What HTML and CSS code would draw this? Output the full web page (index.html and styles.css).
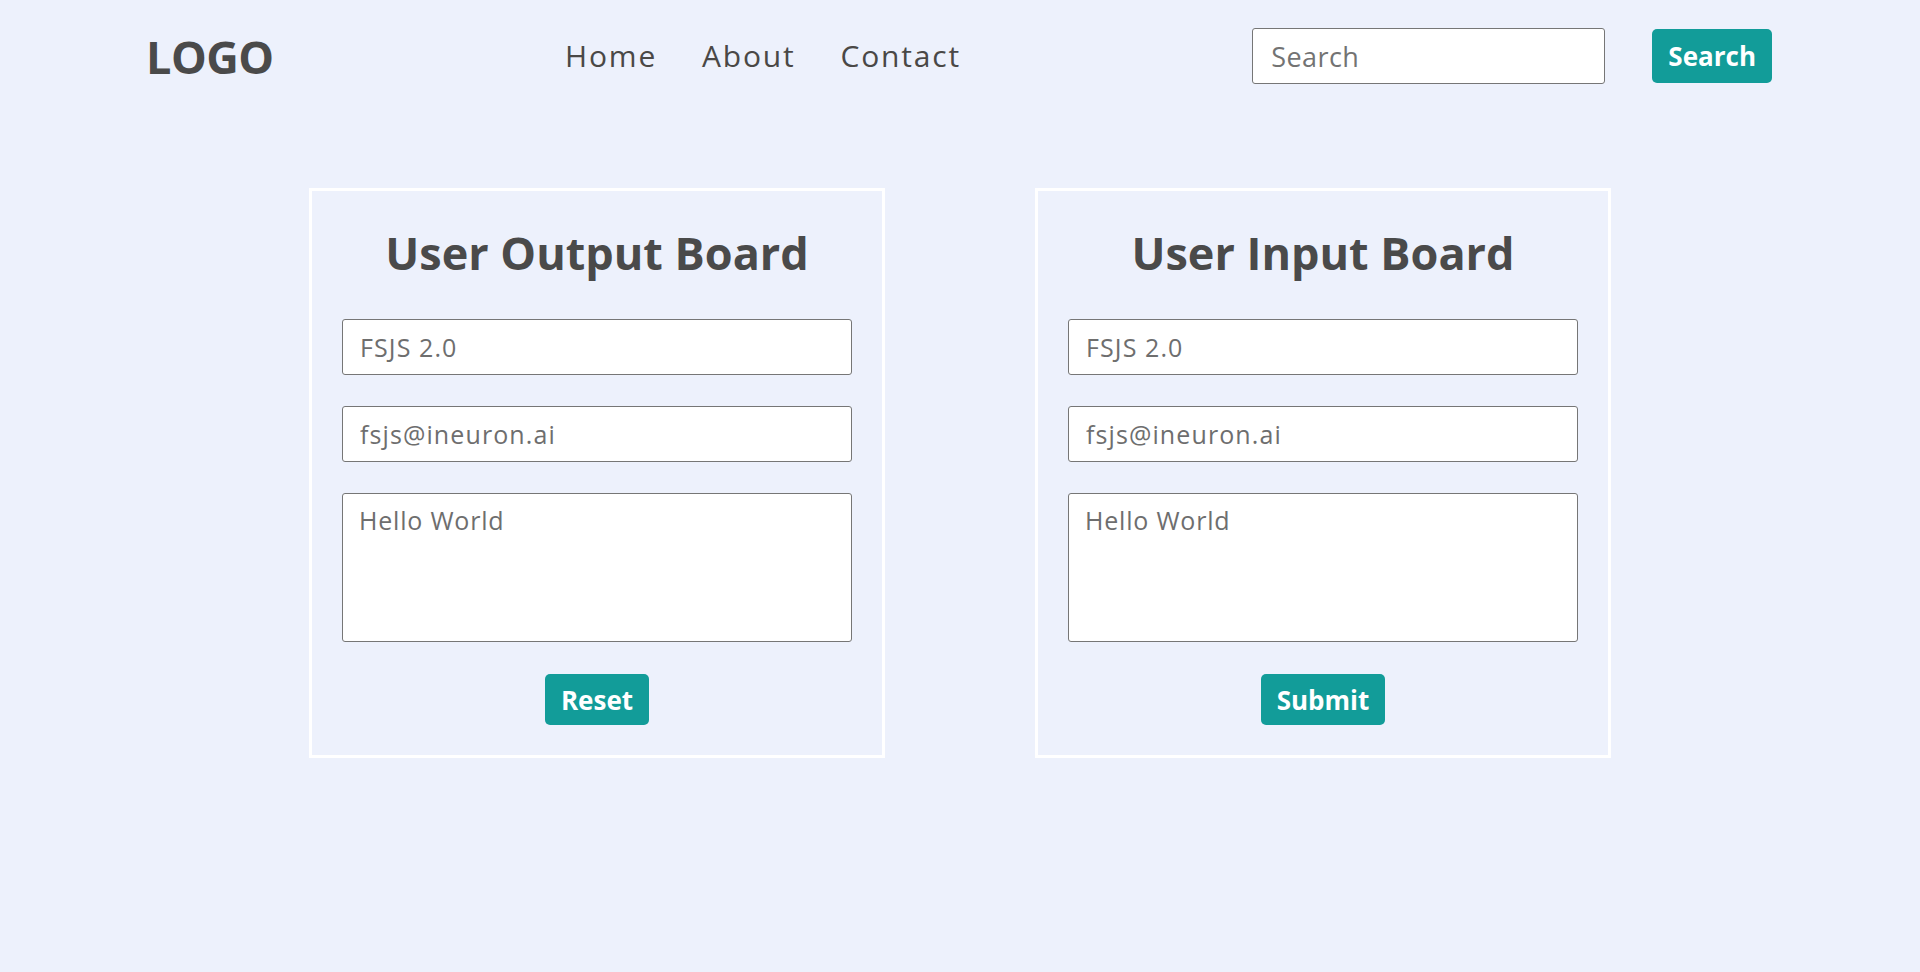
FILE: index.html
```html
<!DOCTYPE html>
<html lang="en">
<head>
<meta charset="UTF-8">
<title>User Board</title>
<link rel="stylesheet" href="styles.css">
</head>
<body>
<header class="topbar">
  <div class="logo">LOGO</div>
  <nav class="nav">
    <a href="#" class="nav-link">Home</a>
    <a href="#" class="nav-link">About</a>
    <a href="#" class="nav-link">Contact</a>
  </nav>
  <form class="search">
    <input type="text" class="search-input" placeholder="Search">
    <button type="button" class="btn btn-search">Search</button>
  </form>
</header>
<main class="boards">
  <section class="board">
    <h2 class="board-title">User Output Board</h2>
    <div class="board-form">
      <input type="text" class="field" value="FSJS 2.0">
      <input type="text" class="field" value="fsjs@ineuron.ai">
      <textarea class="field field-area">Hello World</textarea>
      <button type="button" class="btn btn-action">Reset</button>
    </div>
  </section>
  <section class="board">
    <h2 class="board-title">User Input Board</h2>
    <div class="board-form">
      <input type="text" class="field" value="FSJS 2.0">
      <input type="text" class="field" value="fsjs@ineuron.ai">
      <textarea class="field field-area">Hello World</textarea>
      <button type="button" class="btn btn-action">Submit</button>
    </div>
  </section>
</main>
</body>
</html>
```
FILE: styles.css
```css
* { box-sizing: border-box; }
html, body {
  margin: 0;
  padding: 0;
}
body {
  background: #edf1fc;
  font-family: "Open Sans", "Liberation Sans", sans-serif;
  color: #4a4a4a;
  min-height: 972px;
}
.topbar {
  display: flex;
  align-items: center;
  justify-content: space-between;
  height: 112px;
  padding: 0 148px 0 146px;
}
.logo {
  font-size: 45px;
  font-weight: 700;
  line-height: 1;
  color: #4a4a4a;
  letter-spacing: -0.5px;
}
.nav {
  display: flex;
  gap: 45px;
}
.nav-link {
  font-size: 30px;
  color: #4a4846;
  text-decoration: none;
  line-height: 1.2;
  letter-spacing: 1.8px;
}
.search {
  display: flex;
  align-items: center;
  gap: 47px;
  margin: 0;
}
.search-input {
  width: 353px;
  height: 56px;
  border: 1px solid #767676;
  border-radius: 3px;
  background: #fff;
  padding: 0 18px;
  font-family: inherit;
  font-size: 27px;
  color: #6f6f6f;
  outline: none;
  letter-spacing: 0.4px;
}
.search-input::placeholder {
  color: #737373;
}
.btn {
  background: #129c99;
  color: #fff;
  border: none;
  border-radius: 5px;
  font-family: inherit;
  font-weight: 700;
  font-size: 26px;
  cursor: pointer;
}
.btn-search {
  height: 54px;
  padding: 0 16px;
}
.boards {
  display: flex;
  justify-content: center;
  gap: 150px;
  margin-top: 76px;
}
.board {
  width: 576px;
  border: 3px solid #ffffff;
  padding: 30px;
  display: flex;
  flex-direction: column;
  align-items: center;
}
.board-title {
  margin: 5px 0 39px;
  font-size: 45px;
  line-height: 54px;
  font-weight: 700;
  color: #4a4a4a;
}
.board-form {
  width: 100%;
  display: flex;
  flex-direction: column;
  align-items: center;
  gap: 31px;
}
.field {
  width: 100%;
  height: 56px;
  border: 1px solid #767676;
  border-radius: 3px;
  background: #fff;
  padding: 0 17px;
  font-family: inherit;
  font-size: 25px;
  color: #6e6e6e;
  outline: none;
  letter-spacing: 1.1px;
}
.field-area {
  height: 149px;
  padding: 9px 16px;
  line-height: 1.362;
  resize: none;
  letter-spacing: 0.8px;
}
.btn-action {
  margin-top: 1px;
  height: 51px;
  padding: 0 16px;
}
```
